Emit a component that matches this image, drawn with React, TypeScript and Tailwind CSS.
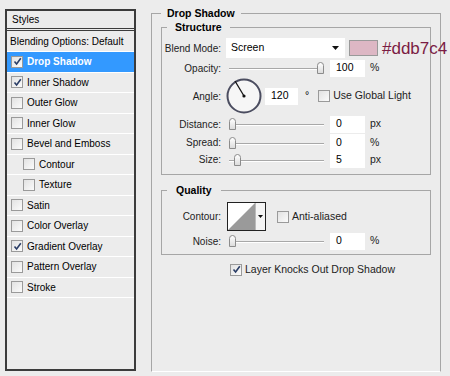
import React from 'react';

const FONT = { fontFamily: '"Liberation Sans", Arial, sans-serif' };

const STYLES = [
  { label: 'Drop Shadow', checked: true, selected: true },
  { label: 'Inner Shadow', checked: true },
  { label: 'Outer Glow' },
  { label: 'Inner Glow' },
  { label: 'Bevel and Emboss' },
  { label: 'Contour', indent: true },
  { label: 'Texture', indent: true },
  { label: 'Satin' },
  { label: 'Color Overlay' },
  { label: 'Gradient Overlay', checked: true },
  { label: 'Pattern Overlay' },
  { label: 'Stroke' },
];

function Check({ checked = false }: { checked?: boolean }) {
  return (
    <span className="flex h-[12px] w-[12px] shrink-0 items-center justify-center border border-[#9a9a9a] bg-gradient-to-br from-[#e2e2e2] to-[#fbfbfb]">
      {checked && (
        <svg width="9" height="9" viewBox="0 0 9 9">
          <path d="M1.5 4.5 L3.6 7 L7.8 1.2" fill="none" stroke="#2a3d66" strokeWidth="1.6" />
        </svg>
      )}
    </span>
  );
}

function Slider({ pos }: { pos: number }) {
  return (
    <div className="relative h-[14px] w-[95px] shrink-0">
      <div className="absolute left-0 right-0 top-[7px] h-[2px] border-t border-b border-t-[#a8a8a8] border-b-white" />
      <div
        className="absolute top-[1px] h-[12px] w-[7px] rounded-t-[4px] border border-[#8c8c8c] bg-gradient-to-b from-white to-[#dcdcdc]"
        style={{ left: pos }}
      />
    </div>
  );
}

function NumBox({ value, unit }: { value: string; unit: string }) {
  return (
    <div className="flex items-center">
      <div className="flex h-[17px] w-[35px] items-center bg-white pl-[6px] text-[10.5px] text-black">{value}</div>
      <span className="ml-[5px] text-[10.5px] text-[#222]">{unit}</span>
    </div>
  );
}

function Label({ children }: { children: React.ReactNode }) {
  return <span className="flex w-[54px] shrink-0 justify-end whitespace-nowrap text-[10px] text-[#222]">{children}</span>;
}

function SliderRow({ label, pos, value, unit, h = 'h-[18px]', mt = 'mt-[1px]' }: { label: string; pos: number; value: string; unit: string; h?: string; mt?: string }) {
  return (
    <div className={`${mt} flex ${h} items-center`}>
      <Label>{label}</Label>
      <div className="ml-[8px]">
        <Slider pos={pos} />
      </div>
      <div className="ml-[6px]">
        <NumBox value={value} unit={unit} />
      </div>
    </div>
  );
}

export default function App() {
  return (
    <div className="flex h-[376px] w-[450px] overflow-hidden bg-[#ececec] text-black" style={FONT}>
      {/* styles list */}
      <div className="ml-[5px] mt-[9px] flex h-[362px] w-[131px] shrink-0 flex-col border-2 border-[#3c3c3c]">
        <div className="flex h-[20px] shrink-0 items-center border-b-[3px] border-double border-[#3c3c3c] px-[5px] text-[10px]">Styles</div>
        <div className="flex h-[21px] shrink-0 items-center whitespace-nowrap border-b border-white px-[3px] text-[10px]">
          Blending Options: Default
        </div>
        {STYLES.map((s) => (
          <div
            key={s.label}
            className={`flex h-[20.5px] shrink-0 items-center gap-[4px] whitespace-nowrap border-b border-white text-[10px] ${
              s.indent ? 'pl-[16px]' : 'pl-[4px]'
            } ${s.selected ? 'bg-[#3399ff] font-bold text-white' : ''}`}
          >
            <Check checked={s.checked} />
            <span>{s.label}</span>
          </div>
        ))}
      </div>

      {/* drop shadow panel */}
      <fieldset className="ml-[15px] mt-[6px] h-[366px] w-[290px] min-w-0 shrink-0 border border-[#a6a6a6] border-b-white px-[9px]">
        <legend className="px-[6px] text-[10.5px] font-bold leading-[14px]">Drop Shadow</legend>

        <fieldset className="h-[155px] min-w-0 border border-[#a6a6a6] px-[5px]">
          <legend className="px-[8px] text-[10.5px] font-bold leading-[14px]">Structure</legend>

          <div className="mt-[4px] flex h-[20px] items-center">
            <Label>Blend Mode:</Label>
            <div className="ml-[5px] flex h-[20px] w-[119px] shrink-0 items-center justify-between bg-white pl-[5px] pr-[6px] text-[10.5px]">
              <span>Screen</span>
              <svg width="7" height="4" viewBox="0 0 7 4">
                <path d="M0 0 H7 L3.5 4 Z" fill="#111" />
              </svg>
            </div>
            <div className="ml-[4px] h-[16px] w-[29px] shrink-0 border border-[#999] bg-[#ddb7c4]" />
            <span className="ml-[4px] whitespace-nowrap text-[17px] leading-none text-[#7b1c44]">#ddb7c4</span>
          </div>

          <SliderRow label="Opacity:" pos={88} value="100" unit="%" />

          <div className="mt-[1px] flex h-[36px] items-center">
            <Label>Angle:</Label>
            <svg className="ml-[5px] shrink-0" width="36" height="36" viewBox="0 0 36 36">
              <circle cx="18" cy="18" r="16.5" fill="#f6f6f6" stroke="#4b4d60" strokeWidth="2" />
              <line x1="18" y1="18" x2="9" y2="3" stroke="#111" strokeWidth="1.3" />
              <circle cx="18" cy="18" r="1.6" fill="#111" />
            </svg>
            <div className="ml-[3px] flex h-[17px] w-[33px] shrink-0 items-center bg-white pl-[6px] text-[10.5px]">120</div>
            <span className="ml-[7px] text-[10.5px]">°</span>
            <div className="ml-[9px] flex items-center gap-[3px] whitespace-nowrap">
              <Check />
              <span className="text-[10.5px] text-[#222]">Use Global Light</span>
            </div>
          </div>

          <SliderRow label="Distance:" pos={0} value="0" unit="px" />
          <SliderRow label="Spread:" pos={0} value="0" unit="%" h="h-[17px]" />
          <SliderRow label="Size:" pos={5} value="5" unit="px" h="h-[17px]" mt="mt-[0px]" />
        </fieldset>

        <fieldset className="mt-[8px] h-[72px] min-w-0 border border-[#a6a6a6] px-[5px]">
          <legend className="px-[9px] text-[10.5px] font-bold leading-[14px]">Quality</legend>

          <div className="mt-[5px] flex h-[29px] items-center">
            <Label>Contour:</Label>
            <div className="ml-[6px] flex h-[29px] w-[39px] shrink-0 border border-[#222] bg-white">
              <svg width="27" height="27" viewBox="0 0 27 27">
                <path d="M0 27 L27 0 V27 Z" fill="#9a9a9a" />
              </svg>
              <div className="flex flex-1 items-center justify-center border-l border-[#bbb] bg-[#f4f4f4]">
                <svg width="5" height="3" viewBox="0 0 5 3">
                  <path d="M0 0 H5 L2.5 3 Z" fill="#111" />
                </svg>
              </div>
            </div>
            <div className="ml-[11px] flex items-center gap-[3px] whitespace-nowrap">
              <Check />
              <span className="text-[10.5px] text-[#222]">Anti-aliased</span>
            </div>
          </div>

          <SliderRow label="Noise:" pos={0} value="0" unit="%" />
        </fieldset>

        <div className="mt-[7px] flex items-center gap-[3px] whitespace-nowrap pl-[69px]">
          <Check checked />
          <span className="text-[10.5px] text-[#222]">Layer Knocks Out Drop Shadow</span>
        </div>
      </fieldset>
    </div>
  );
}
